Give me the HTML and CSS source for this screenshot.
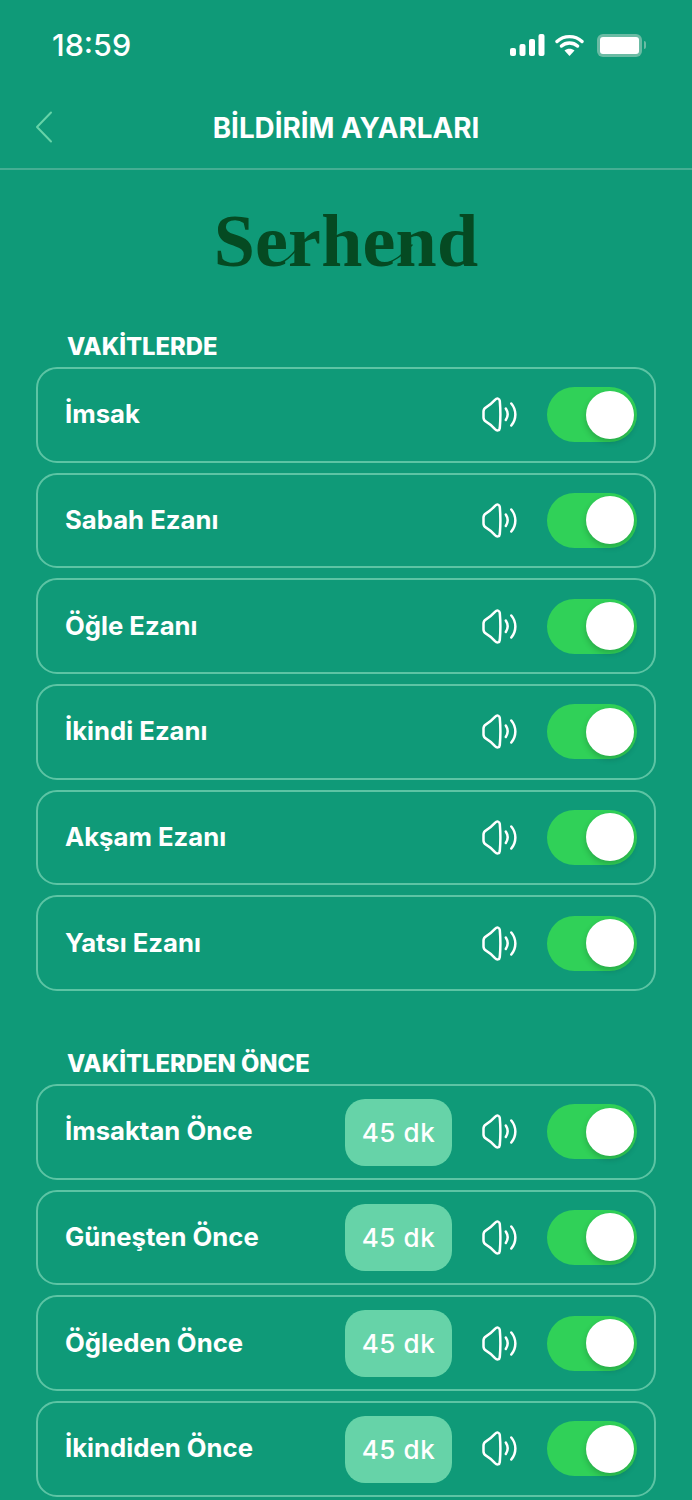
FILE: index.html
```html
<!DOCTYPE html>
<html lang="tr">
<head>
  <meta charset="UTF-8">
  <meta name="viewport" content="width=device-width, initial-scale=1.0">
  <title>Bildirim Ayarları</title>
  <link rel="stylesheet" href="styles.css">
</head>
<body>
  <svg width="0" height="0" class="defs">
    <symbol id="speaker" viewBox="0 0 36 35">
      <path d="M1.500 14.500C1.500 12.500 2.300 11.300 4 10.300 7.500 8.300 10.500 5.500 13 2.800 15 .8 17.500 1.300 17.800 4c.7 8 .7 19 0 27-.3 2.700-2.800 3.200-4.800 1.200-2.500-2.700-5.500-5.500-9-7.500C2.300 23.700 1.500 22.500 1.500 20.500z" fill="none" stroke="#fff" stroke-width="2.500" stroke-linejoin="round"/>
      <path d="M23.800 11.500c2.300 3.500 2.300 8 0 11.500M29.300 6.500c5.400 6.500 5.400 15.500 0 22" fill="none" stroke="#fff" stroke-width="2.500" stroke-linecap="round"/>
    </symbol>
  </svg>

  <div class="status-bar">
    <span class="time">18:59</span>
    <div class="status-icons">
      <svg width="35" height="22" viewBox="0 0 35 22">
        <rect x="0" y="14" width="6" height="8" rx="2" fill="#fff"/>
        <rect x="9.500" y="10" width="6" height="12" rx="2" fill="#fff"/>
        <rect x="19" y="5" width="6" height="17" rx="2" fill="#fff"/>
        <rect x="28.500" y="0" width="6" height="22" rx="2" fill="#fff"/>
      </svg>
      <svg width="29" height="22" viewBox="0 0 29 22">
        <path d="M2 7.500C9 1 20 1 27 7.500M6.500 12c4.500-4 11.500-4 16 0" fill="none" stroke="#fff" stroke-width="3.400" stroke-linecap="round"/>
        <path d="M14.500 22l-5-5.500c2.800-2.300 7.200-2.300 10 0z" fill="#fff"/>
      </svg>
      <div class="battery"><div class="battery-fill"></div></div>
      <div class="battery-cap"></div>
    </div>
  </div>

  <header class="nav">
    <svg class="back" width="18" height="32" viewBox="0 0 18 32">
      <path d="M16 1.500L2 16l14 14.500" fill="none" stroke="#66d3a8" stroke-width="2" stroke-linecap="round" stroke-linejoin="round"/>
    </svg>
    <h1 class="nav-title">BİLDİRİM AYARLARI</h1>
  </header>

  <div class="logo">
    <span class="logo-text">Serhend</span>
    <svg class="logo-swash" width="264" height="50" viewBox="0 0 264 50">
      <path d="M58 48C72 46 78 38 86 28M164 48C180 46 188 38 198 28" fill="none" stroke="#054a22" stroke-width="1.500" stroke-linecap="round"/>
    </svg>
  </div>

  <h2 class="section-title">VAKİTLERDE</h2>
  <div class="list">
    <div class="row">
      <span class="row-label">İmsak</span>
      <svg class="sound"><use href="#speaker"/></svg>
      <div class="toggle"><div class="knob"></div></div>
    </div>
    <div class="row">
      <span class="row-label">Sabah Ezanı</span>
      <svg class="sound"><use href="#speaker"/></svg>
      <div class="toggle"><div class="knob"></div></div>
    </div>
    <div class="row">
      <span class="row-label">Öğle Ezanı</span>
      <svg class="sound"><use href="#speaker"/></svg>
      <div class="toggle"><div class="knob"></div></div>
    </div>
    <div class="row">
      <span class="row-label">İkindi Ezanı</span>
      <svg class="sound"><use href="#speaker"/></svg>
      <div class="toggle"><div class="knob"></div></div>
    </div>
    <div class="row">
      <span class="row-label">Akşam Ezanı</span>
      <svg class="sound"><use href="#speaker"/></svg>
      <div class="toggle"><div class="knob"></div></div>
    </div>
    <div class="row">
      <span class="row-label">Yatsı Ezanı</span>
      <svg class="sound"><use href="#speaker"/></svg>
      <div class="toggle"><div class="knob"></div></div>
    </div>
  </div>

  <h2 class="section-title second">VAKİTLERDEN ÖNCE</h2>
  <div class="list">
    <div class="row">
      <span class="row-label">İmsaktan Önce</span>
      <div class="minutes">45 dk</div>
      <svg class="sound"><use href="#speaker"/></svg>
      <div class="toggle"><div class="knob"></div></div>
    </div>
    <div class="row">
      <span class="row-label">Güneşten Önce</span>
      <div class="minutes">45 dk</div>
      <svg class="sound"><use href="#speaker"/></svg>
      <div class="toggle"><div class="knob"></div></div>
    </div>
    <div class="row">
      <span class="row-label">Öğleden Önce</span>
      <div class="minutes">45 dk</div>
      <svg class="sound"><use href="#speaker"/></svg>
      <div class="toggle"><div class="knob"></div></div>
    </div>
    <div class="row">
      <span class="row-label">İkindiden Önce</span>
      <div class="minutes">45 dk</div>
      <svg class="sound"><use href="#speaker"/></svg>
      <div class="toggle"><div class="knob"></div></div>
    </div>
  </div>
</body>
</html>
```
FILE: styles.css
```css
* {
  margin: 0;
  padding: 0;
  box-sizing: border-box;
}

html,
body {
  height: 1500px;
  overflow: hidden;
}

body {
  background: #0f9a78;
  color: #fff;
  font-family: "Inter", "Liberation Sans", sans-serif;
}

.defs {
  display: block;
  height: 0;
}

.status-bar {
  height: 90px;
  padding: 26px 46px 0 52px;
  display: flex;
  justify-content: space-between;
}

.time {
  font-size: 30.5px;
  line-height: 38px;
  font-weight: 500;
}

.status-icons {
  display: flex;
  align-items: center;
  height: 38px;
  gap: 10px;
}

.battery {
  width: 45px;
  height: 23px;
  margin-left: 3px;
  padding: 3px;
  border-radius: 6px;
  background: #6bbba4;
}

.battery-fill {
  height: 100%;
  border-radius: 3px;
  background: #fff;
}

.battery-cap {
  width: 2px;
  height: 8px;
  margin-left: -8px;
  border-radius: 0 2px 2px 0;
  background: #6bbba4;
}

.nav {
  height: 80px;
  border-bottom: 2px solid #45ae93;
  position: relative;
  display: flex;
  align-items: center;
  justify-content: center;
  padding-bottom: 3px;
}

.back {
  position: absolute;
  left: 35px;
  top: 21px;
}

.nav-title {
  font-size: 27.8px;
  line-height: 36px;
  font-weight: 700;
}

.logo {
  height: 99px;
  position: relative;
  text-align: center;
  font-family: "Liberation Serif", serif;
  font-weight: 700;
  font-size: 74px;
  line-height: 142px;
  letter-spacing: 0.200px;
  color: #054a22;
}

.logo-swash {
  position: absolute;
  left: 214px;
  top: 47px;
}

.section-title {
  margin: 60px 0 0 67px;
  height: 38px;
  font-size: 23.800px;
  line-height: 36px;
  font-weight: 800;
}

.section-title.second {
  margin-top: 55px;
}

.list {
  margin: 0 36px;
  display: flex;
  flex-direction: column;
  gap: 10px;
}

.row {
  height: 95.67px;
  padding: 0 17px 0 27px;
  border: 2px solid #5cc4a4;
  border-radius: 21px;
  display: flex;
  align-items: center;
}

.row-label {
  flex: 1;
  font-size: 25.700px;
  font-weight: 700;
  margin-top: -2px;
}

.minutes {
  width: 107px;
  height: 67px;
  margin: 1px 30px 0 0;
  border-radius: 20px;
  background: #66d3a8;
  font-size: 26px;
  font-weight: 500;
  letter-spacing: 0.600px;
  display: flex;
  align-items: center;
  justify-content: center;
}

.sound {
  width: 36px;
  height: 35px;
  margin-right: 29px;
}

.toggle {
  width: 90px;
  height: 55px;
  border-radius: 28px;
  background: #30d158;
  display: flex;
  align-items: center;
  justify-content: flex-end;
  padding-right: 3px;
}

.knob {
  width: 48px;
  height: 48px;
  border-radius: 50%;
  background: #fff;
  box-shadow: 0 3px 6px rgba(0, 0, 0, 0.2);
}
```
